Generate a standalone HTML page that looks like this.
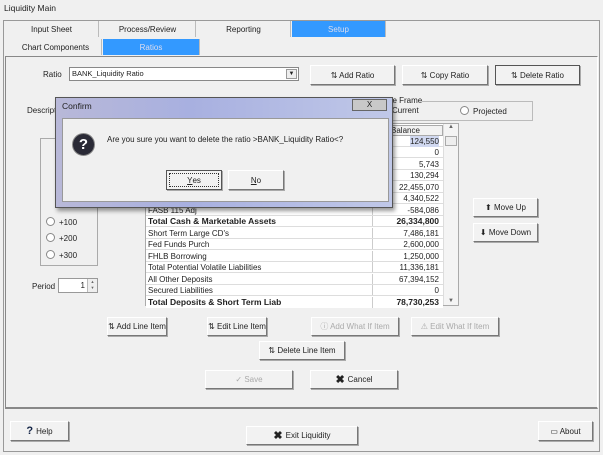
<!DOCTYPE html><html><head><style>
*{box-sizing:border-box}
body{margin:0;width:603px;height:455px;background:#f0f0f0;font-family:"Liberation Sans",sans-serif;font-size:8px;color:#222;position:relative;overflow:hidden}
.a{position:absolute}
.btn{position:absolute;background:#f2f2f2;border:1px solid #fff;border-right-color:#777;border-bottom-color:#777;box-shadow:1px 1px 0 #aaa;display:flex;align-items:center;justify-content:center;font-size:8px;white-space:nowrap}
.dis{color:#aaa}
.tab{position:absolute;height:16px;display:flex;align-items:center;justify-content:center;font-size:8px;border-right:1px solid #bbb}
.blue{background:#3399ff;color:#dde}
.row{position:absolute;left:146px;width:297px;height:11px;border-bottom:1px solid #ddd;background:#fff;font-size:8px;line-height:11px}
.row span{position:absolute;right:4px;top:0}
.row i{font-style:normal;position:absolute;left:2px}
.row em{position:absolute;left:226px;top:0;bottom:0;border-left:1px solid #ccc}
.b{font-weight:bold;font-size:8.5px}
.rad{position:absolute;font-size:8px}
.rad:before{content:"";display:inline-block;width:7px;height:7px;border:1px solid #888;border-radius:50%;background:#fff;margin-right:4px;vertical-align:-1px}
</style></head><body>
<div class="a" style="left:4px;top:3px;font-size:8.5px">Liquidity Main</div>
<div class="a" style="left:3px;top:20px;width:597px;height:432px;border:1px solid #999;background:#f0f0f0"></div>
<div class="tab" style="left:5px;top:21px;width:94px">Input Sheet</div>
<div class="tab" style="left:100px;top:21px;width:96px">Process/Review</div>
<div class="tab" style="left:197px;top:21px;width:94px">Reporting</div>
<div class="tab blue" style="left:292px;top:21px;width:94px">Setup</div>
<div class="tab" style="left:10px;top:39px;width:92px">Chart Components</div>
<div class="tab blue" style="left:103px;top:39px;width:97px">Ratios</div>
<div class="a" style="left:5px;top:56px;width:593px;height:353px;border:1px solid #888;border-right-color:#fff;border-bottom:2px solid #888"></div>
<div class="a" style="left:43px;top:70px">Ratio</div>
<div class="a" style="left:69px;top:67px;width:230px;height:14px;background:#fff;border:1px solid #888;padding-left:2px;line-height:12px;font-size:7.5px">BANK_Liquidity Ratio<div class="a" style="right:1px;top:1px;width:11px;height:10px;background:#eee;border:1px solid #999;font-size:6px;line-height:8px;text-align:center">▼</div></div>
<div class="btn" style="left:310px;top:65px;width:85px;height:20px">⇅ Add Ratio</div>
<div class="btn" style="left:402px;top:65px;width:86px;height:20px">⇅ Copy Ratio</div>
<div class="btn" style="left:495px;top:65px;width:85px;height:20px;border:1px solid #555">⇅ Delete Ratio</div>
<div class="a" style="left:27px;top:106px">Descript</div>
<div class="a" style="left:385px;top:101px;width:148px;height:20px;border:1px solid #bbb"></div>
<div class="a" style="left:388px;top:96px;background:#f0f0f0">ne Frame</div>
<div class="a" style="left:392px;top:106px">Current</div>
<div class="rad" style="left:460px;top:106px">Projected</div>
<div class="a" style="left:40px;top:138px;width:58px;height:128px;border:1px solid #aaa"></div>
<div class="rad" style="left:46px;top:217px">+100</div>
<div class="rad" style="left:46px;top:233px">+200</div>
<div class="rad" style="left:46px;top:250px">+300</div>
<div class="a" style="left:32px;top:282px">Period</div>
<div class="a" style="left:58px;top:278px;width:40px;height:15px;background:#fff;border:1px solid #999;text-align:right;padding-right:12px;line-height:13px">1<div class="a" style="right:0;top:0;width:10px;height:13px;background:#eee;border-left:1px solid #bbb;font-size:4px;line-height:6px;text-align:center;color:#666;padding:0">▲<br>▼</div></div>
<div class="a" style="left:145px;top:123px;width:314px;height:183px;border:1px solid #aaa;background:#fff"></div>
<div class="a" style="left:443px;top:124px;width:15px;height:181px;background:#f4f4f4;border-left:1px solid #ddd;font-size:6px;text-align:center;color:#666">▲<div class="a" style="left:1px;top:12px;width:12px;height:10px;border:1px solid #aaa;background:#eee"></div><div class="a" style="bottom:1px;left:4px">▼</div></div>
<div class="a" style="left:374px;top:125px;width:69px;height:11px;background:#f2f2f2;border:1px solid #aaa;font-size:8px;padding-left:16px">Balance</div>
<div class="row" style="top:136px"><em></em><span style="background:#d0d8f0">124,550</span></div>
<div class="row" style="top:147px"><em></em><span>0</span></div>
<div class="row" style="top:159px"><em></em><span>5,743</span></div>
<div class="row" style="top:170px"><em></em><span>130,294</span></div>
<div class="row" style="top:182px"><em></em><span>22,455,070</span></div>
<div class="row" style="top:193px"><em></em><span>4,340,522</span></div>
<div class="row" style="top:205px"><i>FASB 115 Adj</i><em></em><span>-584,086</span></div>
<div class="row b" style="top:216px"><i>Total Cash &amp; Marketable Assets</i><em></em><span>26,334,800</span></div>
<div class="row" style="top:228px"><i>Short Term Large CD's</i><em></em><span>7,486,181</span></div>
<div class="row" style="top:239px"><i>Fed Funds Purch</i><em></em><span>2,600,000</span></div>
<div class="row" style="top:251px"><i>FHLB Borrowing</i><em></em><span>1,250,000</span></div>
<div class="row" style="top:262px"><i>Total Potential Volatile Liabilities</i><em></em><span>11,336,181</span></div>
<div class="row" style="top:274px"><i>All Other Deposits</i><em></em><span>67,394,152</span></div>
<div class="row" style="top:285px"><i>Secured Liabilities</i><em></em><span>0</span></div>
<div class="row b" style="top:297px;border:none"><i>Total Deposits &amp; Short Term Liab</i><em></em><span>78,730,253</span></div>
<div class="btn" style="left:473px;top:198px;width:65px;height:19px">⬆ Move Up</div>
<div class="btn" style="left:473px;top:223px;width:65px;height:19px">⬇ Move Down</div>
<div class="btn" style="left:107px;top:317px;width:60px;height:19px">⇅ Add Line Item</div>
<div class="btn" style="left:207px;top:317px;width:60px;height:19px">⇅ Edit Line Item</div>
<div class="btn dis" style="left:311px;top:317px;width:88px;height:19px">ⓘ Add What If Item</div>
<div class="btn dis" style="left:411px;top:317px;width:88px;height:19px">⚠ Edit What If Item</div>
<div class="btn" style="left:259px;top:341px;width:86px;height:19px">⇅ Delete Line Item</div>
<div class="btn dis" style="left:205px;top:370px;width:88px;height:19px">✓ Save</div>
<div class="btn" style="left:310px;top:370px;width:88px;height:19px"><b style="font-size:11px;margin-right:3px">✖</b>Cancel</div>
<div class="btn" style="left:10px;top:421px;width:59px;height:20px"><b style="font-size:11px;color:#124;margin-right:3px">?</b>Help</div>
<div class="btn" style="left:246px;top:426px;width:112px;height:19px"><b style="font-size:11px;margin-right:3px">✖</b>Exit Liquidity</div>
<div class="btn" style="left:538px;top:421px;width:55px;height:20px">▭ About</div>
<!-- dialog -->
<div class="a" style="left:55px;top:97px;width:338px;height:111px;background:linear-gradient(90deg,#b8b8d8,#a8b0e0 40%,#c0c8e8);border:1px solid #555;box-shadow:2px 3px 4px rgba(0,0,0,.4)"></div>
<div class="a" style="left:62px;top:101px;font-size:8.5px">Confirm</div>
<div class="a" style="left:352px;top:99px;width:35px;height:12px;background:#c8c8c8;border:1px solid #666;text-align:center;font-size:8px;line-height:10px">X</div>
<div class="a" style="left:62px;top:118px;width:327px;height:84px;background:#f0f0f0;border:1px solid #999"></div>
<div class="a" style="left:72px;top:133px;width:23px;height:23px;border-radius:50%;background:#2a2a36;border:1px solid #888;color:#fff;font-weight:bold;font-size:15px;text-align:center;line-height:22px">?</div>
<div class="a" style="left:107px;top:135px;font-size:8px">Are you sure you want to delete the ratio &gt;BANK_Liquidity Ratio&lt;?</div>
<div class="btn" style="left:166px;top:170px;width:56px;height:20px;border:1px solid #555;outline:1px dotted #333;outline-offset:-4px"><u>Y</u>es</div>
<div class="btn" style="left:228px;top:170px;width:56px;height:20px"><u>N</u>o</div>
</body></html>
